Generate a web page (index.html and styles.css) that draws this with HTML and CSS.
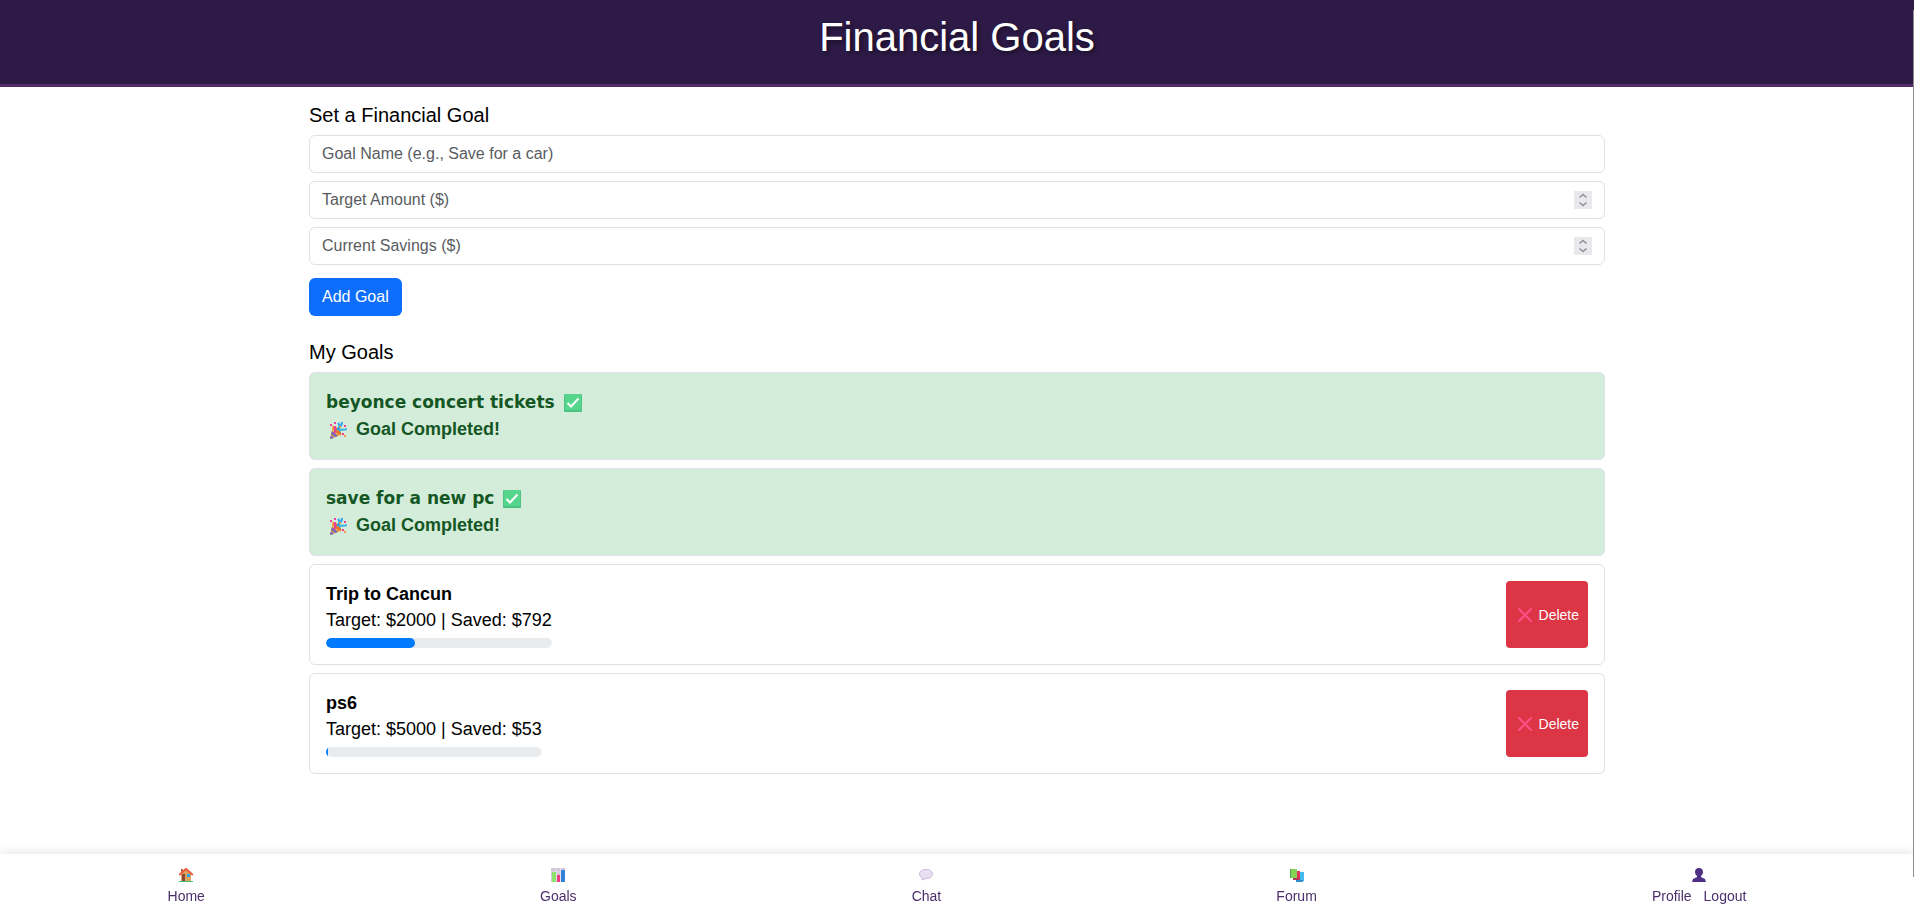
FILE: index.html
```html
<!DOCTYPE html>
<html lang="en">

<head>
    <meta charset="UTF-8">
    <meta name="viewport" content="width=device-width, initial-scale=1.0">
    <title>Financial Goals</title>
    <link rel="stylesheet" href="styles.css">
</head>

<body>
    <!-- Header -->
    <header class="header">
        <h1>Financial Goals</h1>
    </header>

    <!-- Main Content -->
    <main class="container">
        <h2>Set a Financial Goal</h2>
        <form class="goal-form">
            <input type="text" id="goalName" aria-label="Goal Name" placeholder="Goal Name (e.g., Save for a car)">
            <div class="number-field">
                <input type="number" id="targetAmount" aria-label="Target Amount" placeholder="Target Amount ($)">
                <svg class="spinner" viewBox="0 0 18 18" aria-hidden="true"><path d="M5.5 6.5 9 3.5l3.5 3M5.5 11.5l3.5 3 3.5-3"/></svg>
            </div>
            <div class="number-field">
                <input type="number" id="currentSavings" aria-label="Current Savings" placeholder="Current Savings ($)">
                <svg class="spinner" viewBox="0 0 18 18" aria-hidden="true"><path d="M5.5 6.5 9 3.5l3.5 3M5.5 11.5l3.5 3 3.5-3"/></svg>
            </div>
            <button type="button" class="btn-add">Add Goal</button>
        </form>

        <h2>My Goals</h2>
        <ul class="goal-list">
            <li class="goal completed">
                <div class="goal-info">
                    <div class="goal-name">beyonce concert tickets
                        <svg class="check" viewBox="0 0 18 18" aria-hidden="true"><rect width="18" height="18" rx="1" fill="#4cc283"/><rect x="1" width="16" height="16" rx="1" fill="#56d68d"/><path d="M3.5 9 7 12.500l7.500-8" fill="none" stroke="#fff" stroke-width="2"/></svg>
                    </div>
                    <div class="goal-status">
                        <svg class="party" viewBox="0 0 18 18" aria-hidden="true"><path d="M4 5 1 18l11-4z" fill="#f5a83b"/><path d="m3 10 6 5-3 1-4-3zM2 14l3 3-4 1z" fill="#7667b8"/><ellipse cx="8" cy="9.500" rx="2" ry="6" transform="rotate(-45 8 9.500)" fill="#e07a38"/><path d="M8 8c3-1 3-4 1-6M10 9c0-4 3-3 3-8" fill="none" stroke="#2ba4ec" stroke-width="2"/><path d="M10 10c3-3 4 0 8-2" fill="none" stroke="#37b3f1" stroke-width="2"/><path d="M1 3h2v2H1zM5 1h2v2H5zM15 4h2v2h-2zM13 12h2v2h-2zM5 5h2v7H5z" fill="#f33f9b"/><path d="M3 5h2v2H3zM15 14h2v2h-2zM10 5h2v2h-2z" fill="#ef9b46"/></svg>
                        Goal Completed!
                    </div>
                </div>
            </li>
            <li class="goal completed">
                <div class="goal-info">
                    <div class="goal-name">save for a new pc
                        <svg class="check" viewBox="0 0 18 18" aria-hidden="true"><rect width="18" height="18" rx="1" fill="#4cc283"/><rect x="1" width="16" height="16" rx="1" fill="#56d68d"/><path d="M3.5 9 7 12.500l7.500-8" fill="none" stroke="#fff" stroke-width="2"/></svg>
                    </div>
                    <div class="goal-status">
                        <svg class="party" viewBox="0 0 18 18" aria-hidden="true"><path d="M4 5 1 18l11-4z" fill="#f5a83b"/><path d="m3 10 6 5-3 1-4-3zM2 14l3 3-4 1z" fill="#7667b8"/><ellipse cx="8" cy="9.500" rx="2" ry="6" transform="rotate(-45 8 9.500)" fill="#e07a38"/><path d="M8 8c3-1 3-4 1-6M10 9c0-4 3-3 3-8" fill="none" stroke="#2ba4ec" stroke-width="2"/><path d="M10 10c3-3 4 0 8-2" fill="none" stroke="#37b3f1" stroke-width="2"/><path d="M1 3h2v2H1zM5 1h2v2H5zM15 4h2v2h-2zM13 12h2v2h-2zM5 5h2v7H5z" fill="#f33f9b"/><path d="M3 5h2v2H3zM15 14h2v2h-2zM10 5h2v2h-2z" fill="#ef9b46"/></svg>
                        Goal Completed!
                    </div>
                </div>
            </li>
            <li class="goal">
                <div class="goal-info">
                    <strong>Trip to Cancun</strong>
                    <div>Target: $2000 | Saved: $792</div>
                    <div class="progress"><div class="progress-bar" style="width: 39.6%"></div></div>
                </div>
                <button type="button" class="btn-delete">
                    <svg viewBox="0 0 14 14" aria-hidden="true"><path d="m1 1 12 12M13 1 1 13"/></svg>
                    Delete
                </button>
            </li>
            <li class="goal">
                <div class="goal-info">
                    <strong>ps6</strong>
                    <div>Target: $5000 | Saved: $53</div>
                    <div class="progress"><div class="progress-bar" style="width: 1.06%"></div></div>
                </div>
                <button type="button" class="btn-delete">
                    <svg viewBox="0 0 14 14" aria-hidden="true"><path d="m1 1 12 12M13 1 1 13"/></svg>
                    Delete
                </button>
            </li>
        </ul>
    </main>

    <!-- Bottom Navigation -->
    <nav class="bottom-nav">
        <a href="#home" class="nav-item">
            <svg viewBox="0 0 14 14" aria-hidden="true"><path d="M2 6l5-5 5 5v7H2z" fill="#dda160"/><path d="M3 6h3v7H3z" fill="#8a4a35"/><path d="M8 6h3v3H8z" fill="#2ba8ee"/><path d="M2 1h2v3H2z" fill="#b5653e"/><path d="M0 7l7-6 7 6" fill="none" stroke="#ec5a3c" stroke-width="2"/><path d="M0 13h14v1H0z" fill="#45bd72"/></svg>
            <span>Home</span>
        </a>
        <a href="#goals" class="nav-item">
            <svg viewBox="0 0 14 14" aria-hidden="true"><path d="M0 0h14v14H0z" fill="#cfc8da"/><path d="M0 4h14M0 9h14M5 0v14M9.5 0v14" stroke="#e8e2ef"/><path d="M1 4h4v10H1z" fill="#8fe16d"/><path d="M6 7h3v7H6z" fill="#ec3d80"/><path d="M10 2h4v12h-4z" fill="#3384d8"/></svg>
            <span>Goals</span>
        </a>
        <a href="#chat" class="nav-item">
            <svg viewBox="0 0 14 14" aria-hidden="true"><path d="M7 1.5c4 0 6.500 2 6.500 4.500s-2.500 4.500-6.500 4.500L3 12l.5-2C1.500 9 .5 7.500.5 6 .5 3.500 3 1.500 7 1.500z" fill="#e8dff1" stroke="#cbb9dd"/></svg>
            <span>Chat</span>
        </a>
        <a href="#forum" class="nav-item">
            <svg viewBox="0 0 14 14" aria-hidden="true"><path d="M8 4h6v9H8z" fill="#43b9ef"/><path d="M6 12h7v2H6z" fill="#2f8fd0"/><path d="M5 3h5v8H5z" fill="#df355d"/><path d="M3 10h7v2H3z" fill="#b03a58"/><path d="M0 1h7v9H0z" fill="#85d354"/><path d="M0 1h1v9H0z" fill="#4ba95c"/></svg>
            <span>Forum</span>
        </a>
        <div class="nav-item">
            <svg viewBox="0 0 14 14" aria-hidden="true"><path d="M7 0c2.500 0 4 1.500 4 4 0 2-1 3-2 4v1l4 2 1 3H0l1-3 4-2V8C4 7 3 6 3 4c0-2.500 1.500-4 4-4z" fill="#4f3084"/></svg>
            <div class="nav-links">
                <a href="#profile">Profile</a>
                <a href="#logout">Logout</a>
            </div>
        </div>
    </nav>

    <div class="scroll-thumb"></div>
</body>

</html>
```
FILE: styles.css
```css
/* General styling */
* {
    box-sizing: border-box;
}

body {
    font-family: Arial, "Liberation Sans", sans-serif;
    font-size: 16px;
    line-height: 24px;
    background-color: #fff;
    color: #000;
    margin: 0;
    padding-bottom: 80px;
}

/* Header */
.header {
    background-color: #2e1a47;
    border-bottom: 3px solid #512e65;
    padding: 13px 14px 15px;
    text-align: center;
}

.header h1 {
    margin: 0 0 8px;
    color: #fff;
    font-size: 40px;
    font-weight: normal;
    line-height: 48px;
    text-shadow: 2px 2px 4px rgba(0, 0, 0, 0.5);
}

/* Main container */
.container {
    max-width: 1320px;
    margin: 16px auto 0;
    padding: 0 12px;
}

h2 {
    margin: 0 0 8px;
    font-size: 20px;
    font-weight: normal;
    line-height: 24px;
}

/* Goal form */
.goal-form {
    display: flex;
    flex-direction: column;
    gap: 8px;
    margin-bottom: 24px;
}

.goal-form input {
    display: block;
    width: 100%;
    height: 38px;
    padding: 6px 12px;
    border: 1px solid #dee2e6;
    border-radius: 6px;
    font: inherit;
    color: #212529;
    appearance: textfield;
}

.goal-form input::placeholder {
    color: #595c5f;
}

.goal-form input::-webkit-inner-spin-button {
    display: none;
}

.number-field {
    position: relative;
}

.spinner {
    position: absolute;
    top: 10px;
    right: 13px;
    width: 18px;
    height: 18px;
    background-color: #e9e9ed;
    fill: none;
    stroke: #8f8f9d;
    stroke-width: 1.5;
}

/* Buttons */
.btn-add {
    align-self: flex-start;
    margin-top: 5px;
    padding: 7px 13px;
    border: none;
    border-radius: 6px;
    background-color: #0d6efd;
    color: #fff;
    font: inherit;
    cursor: pointer;
}

.btn-delete {
    display: flex;
    align-items: center;
    gap: 7px;
    padding: 4px 9px 4px 12px;
    border: none;
    border-radius: 4px;
    background-color: #dc3545;
    color: #fff;
    font-family: inherit;
    font-size: 14px;
    cursor: pointer;
}

.btn-delete svg {
    width: 14px;
    height: 14px;
    stroke: #ff4f88;
    stroke-width: 2;
    stroke-linecap: round;
}

/* Goal list */
.goal-list {
    display: flex;
    flex-direction: column;
    gap: 8px;
    margin: 0;
    padding: 0;
    list-style: none;
}

.goal {
    display: flex;
    justify-content: space-between;
    padding: 16px;
    border: 1px solid #dee2e6;
    border-radius: 6px;
    font-size: 18px;
    line-height: 26px;
}

.completed {
    background-color: #d4edda;
    color: #155724;
    font-weight: bold;
    line-height: 27px;
}

.goal-name,
.goal-status {
    display: flex;
    align-items: center;
    gap: 9px;
}

.goal-name {
    font-family: "Arial Black", "DejaVu Sans", sans-serif;
    font-size: 17px;
}

.check,
.party {
    width: 18px;
    height: 18px;
}

.party {
    margin-left: 3px;
}

/* Progress bar */
.progress {
    height: 10px;
    margin-top: 5px;
    border-radius: 5px;
    background-color: #e9ecef;
    overflow: hidden;
}

.progress-bar {
    height: 100%;
    border-radius: 5px;
    background-color: #007bff;
}

/* Bottom navigation */
.bottom-nav {
    position: fixed;
    left: 0;
    right: 0;
    bottom: 0;
    display: flex;
    justify-content: space-around;
    padding: 10px 0 5px;
    background-color: #fff;
    box-shadow: 0 -2px 10px rgba(0, 0, 0, 0.1);
    font-size: 14px;
    line-height: 21px;
}

.nav-item {
    display: flex;
    flex-direction: column;
    align-items: center;
    color: #4b2e6b;
    text-decoration: none;
}

.nav-item svg {
    width: 14px;
    height: 14px;
    margin: 4px 0;
}

.nav-links {
    display: flex;
    gap: 12px;
}

.nav-links a {
    color: inherit;
    text-decoration: none;
}

/* Edge of the scroll thumb */
.scroll-thumb {
    position: fixed;
    top: 10px;
    right: 0;
    bottom: 35px;
    width: 1px;
    background-color: #8b8b8b;
}
```
